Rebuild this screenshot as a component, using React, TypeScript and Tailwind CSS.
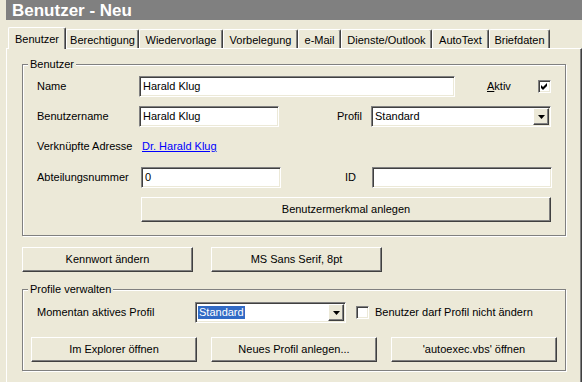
import React from "react";

const sunken =
  "bg-white border border-t-[#808080] border-l-[#808080] border-b-white border-r-white shadow-[inset_1px_1px_0_#404040,inset_-1px_-1px_0_#ECE9D8]";
const raised =
  "bg-[#ECE9D8] border border-t-white border-l-white border-b-[#404040] border-r-[#404040] shadow-[inset_-1px_-1px_0_#808080]";

function Input({ w, value, className = "" }: { w: string; value?: string; className?: string }) {
  return (
    <div className={`${sunken} ${w} h-[21px] flex items-center pl-[3px] ${className}`}>
      <span className="leading-[13px]">{value}</span>
    </div>
  );
}

function Arrow() {
  return (
    <svg width="7" height="4" viewBox="0 0 7 4">
      <polygon points="0,0 7,0 3.5,4" fill="#000" />
    </svg>
  );
}

function Select({ w, value, highlight }: { w: string; value: string; highlight?: boolean }) {
  return (
    <div className={`${sunken} ${w} h-[21px] flex items-center justify-between pl-[1px] pr-[1px]`}>
      {highlight ? (
        <span className="bg-[#316AC5] text-white leading-[13px] px-[1px] ml-[1px]">{value}</span>
      ) : (
        <span className="leading-[13px] pl-[2px]">{value}</span>
      )}
      <div className={`${raised} w-[16px] h-[17px] flex items-center justify-center`}>
        <Arrow />
      </div>
    </div>
  );
}

function Checkbox({ checked }: { checked?: boolean }) {
  return (
    <div className={`${sunken} w-[13px] h-[13px] flex items-center justify-center shrink-0`}>
      {checked && (
        <svg width="7" height="7" viewBox="0 0 7 7">
          <path d="M0 2 L2 4 L6 0 L6 3 L2 7 L0 5 Z" fill="#000" />
        </svg>
      )}
    </div>
  );
}

function Button({ w, children, className = "" }: { w: string; children: React.ReactNode; className?: string }) {
  return (
    <div className={`${raised} ${w} h-[25px] flex items-center justify-center ${className}`}>
      <span className="leading-[13px]">{children}</span>
    </div>
  );
}

const tabs = [
  { label: "Benutzer", w: "w-[58px]" },
  { label: "Berechtigung", w: "w-[73px]" },
  { label: "Wiedervorlage", w: "w-[84px]" },
  { label: "Vorbelegung", w: "w-[75px]" },
  { label: "e-Mail", w: "w-[43px]" },
  { label: "Dienste/Outlook", w: "w-[91px]" },
  { label: "AutoText", w: "w-[57px]" },
  { label: "Briefdaten", w: "w-[61px]" },
];

export default function App() {
  return (
    <div className="w-[582px] h-[382px] overflow-hidden bg-[#ECE9D8] text-black text-[11px] leading-[13px] font-['Liberation_Sans',Arial,sans-serif]">
      <div className="ml-[6px] h-[20px] bg-[#808080] pl-[6px] text-white text-[17px] font-bold leading-[21px]">
        Benutzer - Neu
      </div>

      <div className="flex items-end h-[28px] pl-[2px]">
        {tabs.map((t, i) =>
          i === 0 ? (
            <div
              key={t.label}
              className={`${t.w} ml-[0px] h-[22px] -mb-[1px] relative z-10 bg-[#ECE9D8] border-t border-l border-r border-t-white border-l-white border-r-[#404040] rounded-t-[2px] shadow-[inset_-1px_0_0_#808080] flex items-start justify-center pt-[5px] ml-[6px]`}
            >
              {t.label}
            </div>
          ) : (
            <div
              key={t.label}
              className={`${t.w} h-[19px] border-t border-l border-r border-t-white border-l-white border-r-[#404040] rounded-t-[2px] shadow-[inset_-1px_0_0_#808080] flex items-start justify-center pt-[4px]`}
            >
              {t.label}
            </div>
          )
        )}
      </div>

      <div className="ml-[6px] w-[576px] h-[334px] border-t border-l border-r border-t-white border-l-white border-r-[#404040] shadow-[inset_-1px_0_0_#808080] pl-[15px] pt-[9px]">
        <fieldset className="w-[544px] h-[178px] border border-[#808080] shadow-[inset_1px_1px_0_#fff,1px_1px_0_#fff]">
          <legend className="ml-[5px] px-[2px] bg-[#ECE9D8] leading-[13px]">Benutzer</legend>
          <div className="pl-[14px] pt-[5px] flex flex-col">
            <div className="flex items-center h-[21px]">
              <span className="w-[102px]">Name</span>
              <Input w="w-[316px]" value="Harald Klug" />
              <span className="ml-[32px] w-[51px]">
                <span className="underline">A</span>ktiv
              </span>
              <Checkbox checked />
            </div>
            <div className="flex items-center h-[21px] mt-[9px]">
              <span className="w-[102px]">Benutzername</span>
              <Input w="w-[140px]" value="Harald Klug" />
              <span className="w-[83px] text-right">Profil</span>
              <div className="ml-[9px]">
                <Select w="w-[180px]" value="Standard" />
              </div>
            </div>
            <div className="flex items-center h-[21px] mt-[9px]">
              <span className="w-[102px]">Verknüpfte Adresse</span>
              <span className="ml-[3px] text-[#0000FF] underline">Dr. Harald Klug</span>
            </div>
            <div className="flex items-center h-[21px] mt-[10px]">
              <span className="w-[104px]">Abteilungsnummer</span>
              <Input w="w-[140px]" value="0" />
              <span className="w-[91px] pl-[64px]">ID</span>
              <Input w="w-[180px]" />
            </div>
            <div className="flex mt-[9px]">
              <Button w="w-[410px]" className="ml-[104px]">
                Benutzermerkmal anlegen
              </Button>
            </div>
          </div>
        </fieldset>

        <div className="flex mt-[11px]">
          <Button w="w-[171px]">Kennwort ändern</Button>
          <Button w="w-[171px]" className="ml-[18px]">
            MS Sans Serif, 8pt
          </Button>
        </div>

        <fieldset className="mt-[11px] w-[544px] h-[88px] border border-[#808080] shadow-[inset_1px_1px_0_#fff,1px_1px_0_#fff]">
          <legend className="ml-[5px] px-[2px] bg-[#ECE9D8] leading-[13px]">Profile verwalten</legend>
          <div className="pl-[8px] pt-[6px] flex flex-col">
            <div className="flex items-center h-[21px] pl-[6px]">
              <span className="w-[158px]">Momentan aktives Profil</span>
              <Select w="w-[151px]" value="Standard" highlight />
              <div className="ml-[10px] flex items-center">
                <Checkbox />
                <span className="ml-[6px]">Benutzer darf Profil nicht ändern</span>
              </div>
            </div>
            <div className="flex mt-[14px]">
              <Button w="w-[166px]">Im Explorer öffnen</Button>
              <Button w="w-[166px]" className="ml-[14px]">
                Neues Profil anlegen...
              </Button>
              <Button w="w-[166px]" className="ml-[14px]">
                'autoexec.vbs' öffnen
              </Button>
            </div>
          </div>
        </fieldset>
      </div>
    </div>
  );
}
